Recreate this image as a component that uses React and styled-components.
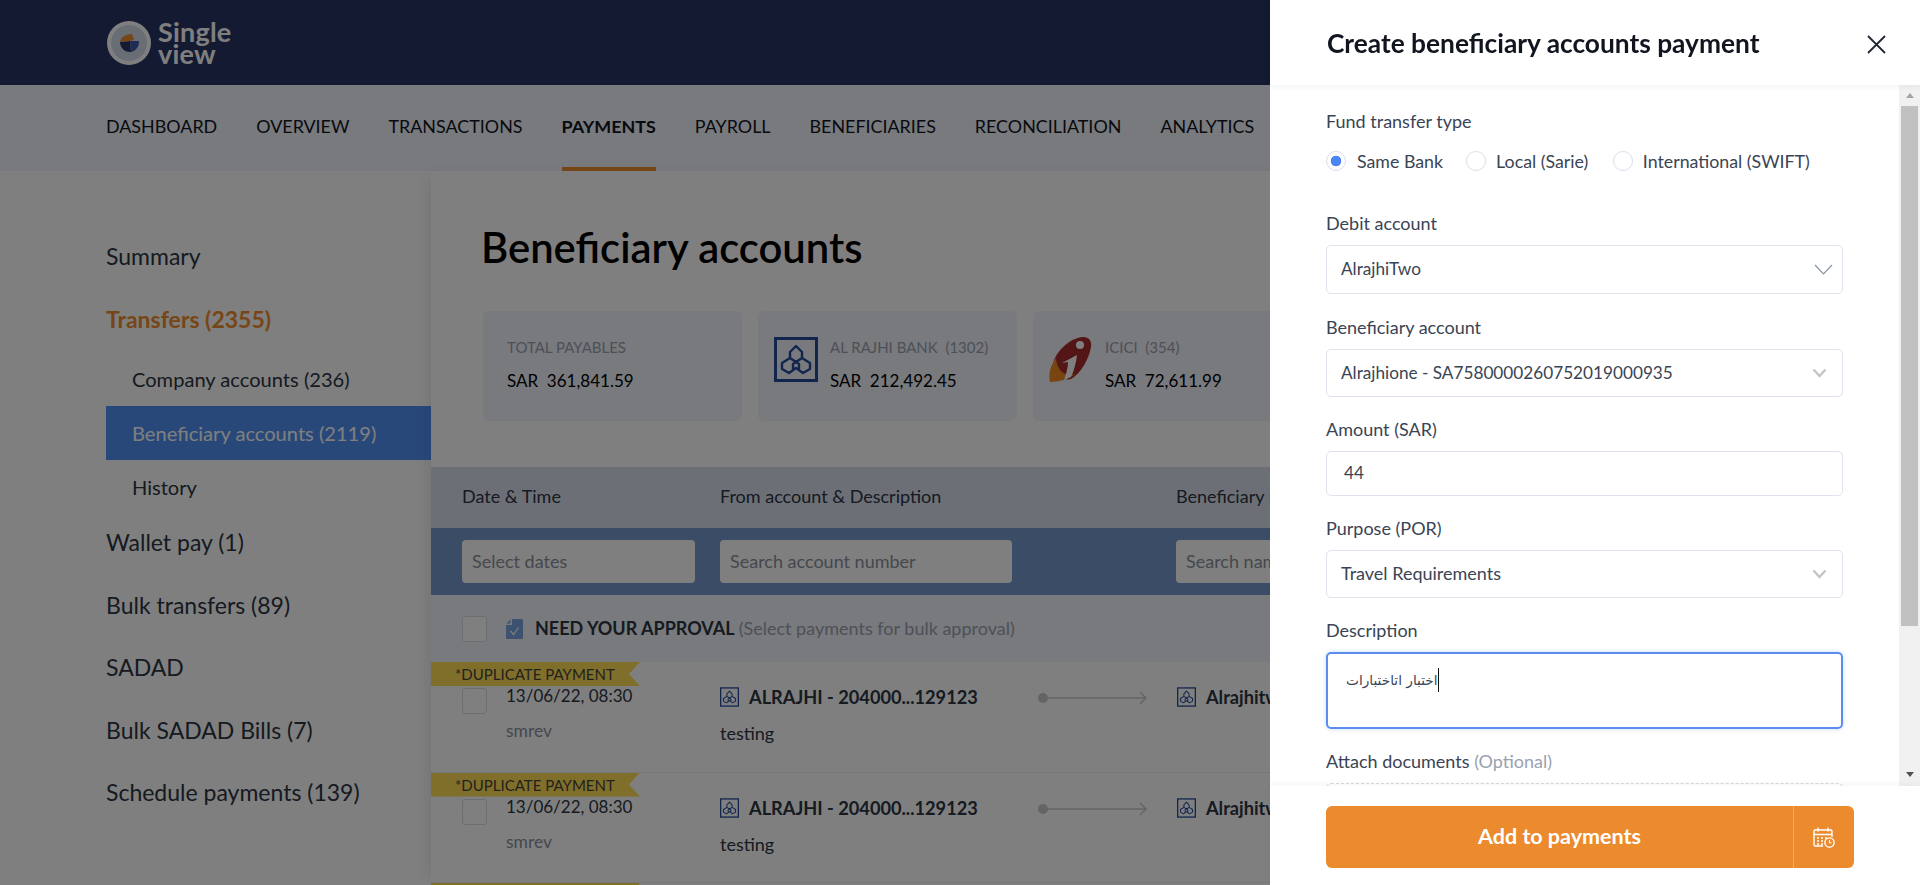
import React from "react";
import styled, { createGlobalStyle } from "styled-components";

const GlobalStyle = createGlobalStyle`
    html, body { margin: 0; padding: 0; height: 100%; overflow: hidden; background: #fff; }
    body { font-family: "Lato", "Liberation Sans", sans-serif; color: #1f2733; }
    * { box-sizing: border-box; }
`;

const Page = styled.div`
    width: 1920px;
    height: 885px;
    overflow: hidden;
    display: flex;
    flex-direction: column;
`;

const Header = styled.header`
    height: 85px;
    flex: none;
    background: #2a3466;
    padding-left: 107px;
    display: flex;
    align-items: center;
    gap: 7px;
`;

const LogoText = styled.div`
    color: #fff;
    font-size: 27px;
    line-height: 22px;
    font-weight: 700;
    letter-spacing: 0.2px;
`;

const Nav = styled.nav`
    height: 86px;
    flex: none;
    background: #f1f4fa;
    padding-left: 106px;
    display: flex;
    gap: 39px;
`;

const NavItem = styled.a`
    display: block;
    height: 86px;
    line-height: 83px;
    font-size: 17.9px;
    white-space: nowrap;
    color: #10151f;
    font-weight: ${(props) => (props.$active ? 700 : 400)};
    border-bottom: 4px solid ${(props) => (props.$active ? "#ee8c2e" : "transparent")};
`;

const Body = styled.div`
    flex: 1;
    display: flex;
    min-height: 0;
`;

const Sidebar = styled.aside`
    width: 431px;
    flex: none;
    padding: 54px 0 0 106px;
`;

const MainItem = styled.div`
    height: ${(props) => (props.$active ? 64 : 62.5)}px;
    line-height: 62px;
    font-size: 23px;
    color: ${(props) => (props.$active ? "#ee8c2e" : "#2c3442")};
    font-weight: ${(props) => (props.$active ? 700 : 400)};
`;

const SubItem = styled.div`
    height: ${(props) => (props.$last ? 51.5 : 54)}px;
    line-height: 54px;
    padding-left: 26px;
    font-size: 20.1px;
    color: ${(props) => (props.$active ? "#fff" : "#2c3442")};
    background: ${(props) => (props.$active ? "#5290f5" : "transparent")};
`;

const Content = styled.main`
    flex: 1;
    min-width: 0;
    box-shadow: -10px 0 16px -8px rgba(30, 40, 70, 0.12);
`;

const Title = styled.h1`
    margin: 0;
    padding: 48px 0 0 50px;
    height: 140px;
    font-size: 41.8px;
    line-height: 56px;
    font-weight: 600;
    color: #000;
    white-space: nowrap;
`;

const Cards = styled.div`
    display: flex;
    gap: 16px;
    padding-left: 52px;
    height: 156px;
`;

const Card = styled.div`
    width: 259px;
    height: 110px;
    flex: none;
    background: #f1f4fa;
    border-radius: 6px;
    padding: 26px 0 0 ${(props) => (props.$logo ? "16px" : "24px")};
    display: flex;
    gap: 12px;
`;

const CardText = styled.div`
    display: flex;
    flex-direction: column;
    gap: 14px;
`;

const CardLabel = styled.div`
    font-size: 15px;
    line-height: 20px;
    color: #9aa1b0;
    white-space: nowrap;
`;

const CardValue = styled.div`
    font-size: 17px;
    line-height: 20px;
    color: #000;
    white-space: nowrap;
`;

const TableHead = styled.div`
    height: 61px;
    display: flex;
    align-items: center;
    padding: 0 0 3px 31px;
    background: #d8e1ed;
    font-size: 18px;
    color: #2c3442;
`;

const FilterRow = styled.div`
    height: 67px;
    display: flex;
    align-items: center;
    padding-left: 31px;
    background: #7598cc;
`;

const Column = styled.div`
    width: ${(props) => props.$width}px;
    flex: none;
    white-space: nowrap;
`;

const FilterInput = styled.div`
    width: ${(props) => props.$width}px;
    height: 43px;
    line-height: 43px;
    padding-left: 10px;
    background: #fff;
    border-radius: 4px;
    font-size: 18px;
    color: #8a919c;
    white-space: nowrap;
    overflow: hidden;
`;

const ApprovalBar = styled.div`
    height: 67px;
    display: flex;
    align-items: center;
    padding-left: 31px;
    background: #f1f4fa;
    font-size: 18px;
    white-space: nowrap;
`;

const Checkbox = styled.span`
    display: block;
    width: 25px;
    height: 26px;
    flex: none;
    background: #fff;
    border: 1px solid #d7dce5;
    border-radius: 3px;
`;

const ApprovalTitle = styled.b`
    margin: -2px 4px 0 12px;
    font-weight: 700;
    color: #2c3442;
`;

const Muted = styled.span`
    color: #9aa1b0;
`;

const ApprovalHint = styled(Muted)`
    margin-top: -2px;
`;

const Row = styled.div`
    position: relative;
    height: 110.5px;
    flex: none;
    display: flex;
    padding: 23px 0 0 31px;
    border-bottom: 1px solid #edeff3;
    white-space: nowrap;
`;

const Ribbon = styled.div`
    position: absolute;
    top: 0;
    left: 0;
    width: 209px;
    height: 24px;
    line-height: 24px;
    padding-left: 24px;
    font-size: 15px;
    color: #46433a;
    background: #ffdf55;
    clip-path: polygon(0 0, 100% 0, calc(100% - 11px) 50%, 100% 100%, 0 100%);
`;

const RowCheck = styled(Checkbox)`
    margin: 3px 19px 0 0;
`;

const DateCell = styled.div`
    width: 214px;
    flex: none;
    font-size: 17px;
    line-height: 22px;
    color: #2c3442;
`;

const Sub = styled.div`
    margin-top: 13px;
    font-size: 17.5px;
    color: #8a919c;
`;

const AccountCell = styled.div`
    width: ${(props) => props.$width}px;
    flex: none;
    font-size: 18px;
    line-height: 22px;
    color: #2c3442;
`;

const AccountName = styled.div`
    display: flex;
    align-items: center;
    gap: 10px;
    font-size: 18.2px;
    font-weight: 700;
    margin-top: 1px;
`;

const Note = styled.div`
    margin-top: 14px;
`;

const Connector = styled.svg`
    width: 109px;
    height: 16px;
    flex: none;
    margin: 5px 30px 0 0;
`;

const Overlay = styled.div`
    position: fixed;
    inset: 0;
    background: rgba(0, 0, 0, 0.5);
`;

const Drawer = styled.section`
    position: fixed;
    top: 0;
    right: 0;
    bottom: 0;
    width: 650px;
    background: #fff;
    display: flex;
    flex-direction: column;
`;

const DrawerHead = styled.div`
    height: 85px;
    flex: none;
    display: flex;
    align-items: center;
    justify-content: space-between;
    padding: 0 34px 0 57px;
    box-shadow: 0 2px 6px rgba(40, 50, 80, 0.06);
    position: relative;
`;

const DrawerTitle = styled.h2`
    margin: 0;
    font-size: 26.3px;
    font-weight: 700;
    color: #10151f;
    white-space: nowrap;
`;

const CloseButton = styled.div`
    display: flex;
    padding-top: 3px;
`;

const DrawerBody = styled.div`
    flex: 1;
    min-height: 0;
    display: flex;
`;

const Scroller = styled.div`
    flex: 1;
    min-width: 0;
    overflow: hidden;
    padding: 25px 0 0 56px;
`;

const ScrollRail = styled.div`
    width: 21px;
    flex: none;
    display: flex;
    flex-direction: column;
    align-items: center;
    background: #f1f1f1;
`;

const ArrowUp = styled.div`
    height: 21px;
    width: 17px;
    flex: none;
    display: flex;
    align-items: center;
    justify-content: center;

    &::before {
        content: "";
        border-left: 4.5px solid transparent;
        border-right: 4.5px solid transparent;
        border-bottom: 5px solid #a3a3a3;
    }
`;

const ArrowDown = styled.div`
    margin-top: auto;
    height: 24px;
    width: 17px;
    flex: none;
    display: flex;
    align-items: center;
    justify-content: center;

    &::before {
        content: "";
        border-left: 4.5px solid transparent;
        border-right: 4.5px solid transparent;
        border-top: 5px solid #505050;
    }
`;

const ScrollThumb = styled.div`
    width: 17px;
    height: 520px;
    flex: none;
    background: #c1c1c1;
`;

const Form = styled.div`
    width: 517px;
`;

const Field = styled.div`
    margin-bottom: ${(props) => props.$gap || 21}px;
`;

const Label = styled.div`
    font-size: 18px;
    line-height: 22px;
    margin-bottom: ${(props) => props.$gap || 11}px;
    color: #3a4454;
    white-space: nowrap;
`;

const Radios = styled.div`
    display: flex;
    align-items: center;
    font-size: 17.8px;
    color: #3a4454;
    white-space: nowrap;
`;

const Radio = styled.span`
    width: 20px;
    height: 20px;
    flex: none;
    margin: 0 ${(props) => props.$after}px 0 ${(props) => props.$before || 0}px;
    border-radius: 50%;
    border: 1px solid #d9deea;
    background: ${(props) => (props.$on ? "radial-gradient(circle, #4c85f5 0 5px, #fff 5.6px)" : "#fff")};
`;

const Control = styled.div`
    height: ${(props) => props.$height}px;
    display: flex;
    align-items: center;
    justify-content: space-between;
    padding: 0 ${(props) => props.$right || 15}px 2px ${(props) => props.$left || 14}px;
    border: 1px solid #dfe3ec;
    border-radius: 5px;
    font-size: ${(props) => props.$size || 17.2}px;
    color: #3a4454;
    white-space: nowrap;

    svg { margin-top: 2px; }
`;

const TextArea = styled.div`
    height: 77px;
    padding: 14px 0 0 18px;
    border: 2px solid #5b8def;
    border-radius: 5px;
    box-shadow: 0 0 4px rgba(91, 141, 239, 0.35);
    font-family: "DejaVu Sans", sans-serif;
    font-size: 13.7px;
    line-height: 24px;
    color: #3a4454;
`;

const TypedText = styled.span`
    display: inline-block;
    height: 24px;
    border-right: 1px solid #111;
    direction: rtl;
`;

const DropZone = styled.div`
    height: 140px;
    border: 1px dashed #d5d9e2;
    border-radius: 5px;
`;

const DrawerFoot = styled.div`
    height: 99px;
    flex: none;
    padding: 20px 0 0 56px;
    box-shadow: 0 -2px 6px rgba(40, 50, 80, 0.05);
    position: relative;
    background: #fff;
`;

const SubmitBar = styled.div`
    width: 528px;
    height: 62px;
    display: flex;
    border-radius: 6px;
    background: #ec8a2e;
    color: #fff;
`;

const SubmitLabel = styled.div`
    flex: 1;
    text-align: center;
    line-height: 60px;
    font-size: 21.5px;
    font-weight: 700;
`;

const SubmitIcon = styled.div`
    width: 61px;
    flex: none;
    display: flex;
    align-items: center;
    justify-content: center;
    border-left: 1px solid #f3ab64;
`;

const BankMark = ({ size = 44 }) => (
    <svg width={size} height={size + 1} viewBox="0 0 44 45" style={{ flex: "none" }}>
        <rect x="1.5" y="1.5" width="41" height="42" fill="none" stroke="#234a9c" strokeWidth="3" />
        <path
            d="M22 9 L28 15 V21 L36 26 V32 L29 36 L22 31 L15 36 L8 32 V26 L16 21 V15 Z M16 21 L25 27 V33 M28 21 L19 27 V33"
            fill="none"
            stroke="#234a9c"
            strokeWidth="2.4"
            strokeLinejoin="round"
        />
    </svg>
);

const IciciMark = () => (
    <svg width="44" height="45" viewBox="0 0 44 45" style={{ flex: "none" }}>
        <path d="M34 0 C40 0 43 4 42 10 C40 22 32 36 22 42 C14 44 4 38 4 28 C5 16 20 1 34 0 Z" fill="#a62a2a" />
        <path d="M7 21 C2 28 -1 36 1 45 C10 45 20 42 26 37 C16 40 8 34 7 21 Z" fill="#f08a24" />
        <circle cx="31" cy="8" r="4" fill="#fff" />
        <path d="M13 26 L28 18 C27 26 25 34 22 40 L15 43 C17 37 19 31 19 25 Z" fill="#fff" />
    </svg>
);

const LogoMark = () => (
    <svg width="44" height="44" viewBox="0 0 44 44" style={{ flex: "none" }}>
        <circle cx="22" cy="22" r="22" fill="#fff" />
        <circle cx="22" cy="22" r="18" fill="#d3dcea" />
        <path d="M13 21 A10 10 0 0 0 24 31 L23 20 Z" fill="#2a3466" />
        <path d="M24 31 A10 10 0 0 0 32 20 L23 20 Z" fill="#3e5aa8" />
        <path d="M13 21 C14 16 19 13 25 13 L27 19 L23 20 Z" fill="#ee8c2e" />
    </svg>
);

const CloseIcon = () => (
    <svg width="19" height="19" viewBox="0 0 19 19">
        <path d="M1 1 L18 18 M18 1 L1 18" stroke="#1f2733" strokeWidth="1.8" fill="none" />
    </svg>
);

const Chevron = ({ thin }) =>
    thin ? (
        <svg width="19" height="11" viewBox="0 0 19 11">
            <path d="M1 1 L9.5 10 L18 1" stroke="#8793a5" strokeWidth="1.2" fill="none" />
        </svg>
    ) : (
        <svg width="15" height="10" viewBox="0 0 15 10">
            <path d="M1.5 1.5 L7.5 8 L13.5 1.5" stroke="#c4c4c4" strokeWidth="2.4" fill="none" />
        </svg>
    );

const ApprovalIcon = () => (
    <svg width="17" height="20" viewBox="0 0 17 20" style={{ flex: "none", marginLeft: 19 }}>
        <path d="M6 0 H16 A1 1 0 0 1 17 1 V19 A1 1 0 0 1 16 20 H1 A1 1 0 0 1 0 19 V6 H6 Z" fill="#7ba4dc" />
        <path d="M0.5 4.5 L4.5 0.5 V4.5 Z" fill="#7ba4dc" />
        <path d="M4.5 12 L7.5 15.5 L12.5 8.5" stroke="#fff" strokeWidth="1.2" fill="none" />
    </svg>
);

const CalendarIcon = () => (
    <svg width="22" height="21" viewBox="0 0 22 21" fill="none" stroke="#fff" strokeWidth="1.4">
        <path d="M10 19 H2 A1.2 1.2 0 0 1 1 18 V4 A1.2 1.2 0 0 1 2 3 H18 A1.2 1.2 0 0 1 19 4 V10" />
        <path d="M1 7.5 H19 M5 0.5 V4.5 M15 0.5 V4.5" />
        <path d="M4 11 H6 M8 11 H10 M4 14 H6 M8 14 H10 M12 11 H14 M4 17 H6 M8 17 H10" strokeWidth="1.6" />
        <circle cx="16.5" cy="15.5" r="4.6" />
        <path d="M16.5 13 V15.8 H18.6" strokeWidth="1.1" />
    </svg>
);

const navItems = ["DASHBOARD", "OVERVIEW", "TRANSACTIONS", "PAYMENTS", "PAYROLL", "BENEFICIARIES", "RECONCILIATION", "ANALYTICS"];

function PaymentRow() {
    return (
        <Row>
            <Ribbon>*DUPLICATE PAYMENT</Ribbon>
            <RowCheck />
            <DateCell>
                13/06/22, 08:30
                <Sub>smrev</Sub>
            </DateCell>
            <AccountCell $width={318}>
                <AccountName>
                    <BankMark size={19} />
                    ALRAJHI - 204000...129123
                </AccountName>
                <Note>testing</Note>
            </AccountCell>
            <Connector viewBox="0 0 109 16">
                <circle cx="5" cy="8" r="5" fill="#c9c9c9" />
                <path d="M6 8 H108 M102 2 L108 8 L102 14" stroke="#c9c9c9" strokeWidth="1.5" fill="none" />
            </Connector>
            <AccountCell $width={300}>
                <AccountName>
                    <BankMark size={19} />
                    Alrajhitwo - 204000...129123
                </AccountName>
            </AccountCell>
        </Row>
    );
}

function App() {
    return (
        <Page>
            <GlobalStyle />
            <Header>
                <LogoMark />
                <LogoText>
                    Single
                    <br />
                    view
                </LogoText>
            </Header>
            <Nav>
                {navItems.map((item) => (
                    <NavItem key={item} $active={item === "PAYMENTS"}>
                        {item}
                    </NavItem>
                ))}
            </Nav>
            <Body>
                <Sidebar>
                    <MainItem>Summary</MainItem>
                    <MainItem $active>Transfers (2355)</MainItem>
                    <SubItem>Company accounts (236)</SubItem>
                    <SubItem $active>Beneficiary accounts (2119)</SubItem>
                    <SubItem $last>History</SubItem>
                    <MainItem>Wallet pay (1)</MainItem>
                    <MainItem>Bulk transfers (89)</MainItem>
                    <MainItem>SADAD</MainItem>
                    <MainItem>Bulk SADAD Bills (7)</MainItem>
                    <MainItem>Schedule payments (139)</MainItem>
                </Sidebar>
                <Content>
                    <Title>Beneficiary accounts</Title>
                    <Cards>
                        <Card>
                            <CardText>
                                <CardLabel>TOTAL PAYABLES</CardLabel>
                                <CardValue>SAR&nbsp; 361,841.59</CardValue>
                            </CardText>
                        </Card>
                        <Card $logo>
                            <BankMark />
                            <CardText>
                                <CardLabel>AL RAJHI BANK&nbsp; (1302)</CardLabel>
                                <CardValue>SAR&nbsp; 212,492.45</CardValue>
                            </CardText>
                        </Card>
                        <Card $logo>
                            <IciciMark />
                            <CardText>
                                <CardLabel>ICICI&nbsp; (354)</CardLabel>
                                <CardValue>SAR&nbsp; 72,611.99</CardValue>
                            </CardText>
                        </Card>
                    </Cards>
                    <TableHead>
                        <Column $width={258}>Date &amp; Time</Column>
                        <Column $width={456}>From account &amp; Description</Column>
                        <Column $width={300}>Beneficiary name</Column>
                    </TableHead>
                    <FilterRow>
                        <Column $width={258}>
                            <FilterInput $width={233}>Select dates</FilterInput>
                        </Column>
                        <Column $width={456}>
                            <FilterInput $width={292}>Search account number</FilterInput>
                        </Column>
                        <Column $width={300}>
                            <FilterInput $width={292}>Search name</FilterInput>
                        </Column>
                    </FilterRow>
                    <ApprovalBar>
                        <Checkbox />
                        <ApprovalIcon />
                        <ApprovalTitle>NEED YOUR APPROVAL</ApprovalTitle>
                        <ApprovalHint>(Select payments for bulk approval)</ApprovalHint>
                    </ApprovalBar>
                    <PaymentRow />
                    <PaymentRow />
                    <PaymentRow />
                </Content>
            </Body>
            <Overlay />
            <Drawer>
                <DrawerHead>
                    <DrawerTitle>Create beneficiary accounts payment</DrawerTitle>
                    <CloseButton>
                        <CloseIcon />
                    </CloseButton>
                </DrawerHead>
                <DrawerBody>
                    <Scroller>
                        <Form>
                            <Field $gap={40}>
                                <Label $gap={18}>Fund transfer type</Label>
                                <Radios>
                                    <Radio $on $after={11} />
                                    Same Bank
                                    <Radio $before={23} $after={10} />
                                    Local (Sarie)
                                    <Radio $before={24.5} $after={10} />
                                    International (SWIFT)
                                </Radios>
                            </Field>
                            <Field $gap={22}>
                                <Label>Debit account</Label>
                                <Control $height={49} $right={9}>
                                    AlrajhiTwo
                                    <Chevron thin />
                                </Control>
                            </Field>
                            <Field>
                                <Label>Beneficiary account</Label>
                                <Control $height={48}>
                                    Alrajhione - SA7580000260752019000935
                                    <Chevron />
                                </Control>
                            </Field>
                            <Field>
                                <Label>Amount (SAR)</Label>
                                <Control $height={45} $left={17}>
                                    44
                                </Control>
                            </Field>
                            <Field>
                                <Label>Purpose (POR)</Label>
                                <Control $height={48} $size={18}>
                                    Travel Requirements
                                    <Chevron />
                                </Control>
                            </Field>
                            <Field>
                                <Label>Description</Label>
                                <TextArea>
                                    <TypedText>اختبار اتاختبارات</TypedText>
                                </TextArea>
                            </Field>
                            <Field>
                                <Label>
                                    Attach documents <Muted>(Optional)</Muted>
                                </Label>
                                <DropZone />
                            </Field>
                        </Form>
                    </Scroller>
                    <ScrollRail>
                        <ArrowUp />
                        <ScrollThumb />
                        <ArrowDown />
                    </ScrollRail>
                </DrawerBody>
                <DrawerFoot>
                    <SubmitBar>
                        <SubmitLabel>Add to payments</SubmitLabel>
                        <SubmitIcon>
                            <CalendarIcon />
                        </SubmitIcon>
                    </SubmitBar>
                </DrawerFoot>
            </Drawer>
        </Page>
    );
}

export default App;
